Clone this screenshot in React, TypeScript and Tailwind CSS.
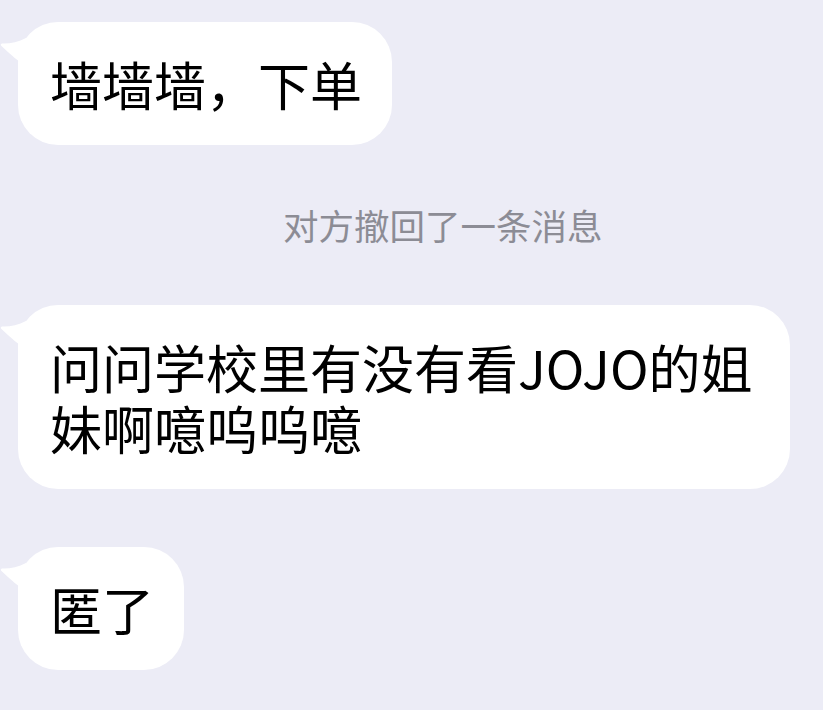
import React from "react";

const font = {
  fontFamily: '"Noto Sans CJK SC", "Noto Sans", sans-serif',
};

function Tail() {
  return (
    <svg
      className="absolute left-[-18px] top-[14px]"
      width="26"
      height="30"
      viewBox="0 0 26 30"
    >
      <path
        d="M26 2 C18 6 9 8 2 7.5 Q0 8 1 9.5 C8 16 15 23 26 30 Z"
        fill="#ffffff"
      />
    </svg>
  );
}

function Bubble({ children, wide }: { children: React.ReactNode; wide?: boolean }) {
  return (
    <div
      className={
        "relative self-start rounded-[40px] bg-white py-[31px] pl-[32px] pr-[30px] text-[52px] leading-[61px] text-black " +
        (wide ? "w-[772px]" : "")
      }
    >
      <Tail />
      {children}
    </div>
  );
}

export default function App() {
  return (
    <div
      className="flex h-[710px] w-[823px] flex-col overflow-hidden bg-[#ececf6] px-[18px] pt-[22px]"
      style={font}
    >
      <Bubble>墙墙墙，下单</Bubble>

      {/* recalled notice */}
      <div className="mt-[60px] mb-[60px] pl-[265px] text-[35.5px] leading-[40px] text-[#8c8c95]">
        对方撤回了一条消息
      </div>

      <Bubble wide>问问学校里有没有看JOJO的姐妹啊噫呜呜噫</Bubble>

      <div className="h-[58px]" />

      <Bubble>匿了</Bubble>
    </div>
  );
}
